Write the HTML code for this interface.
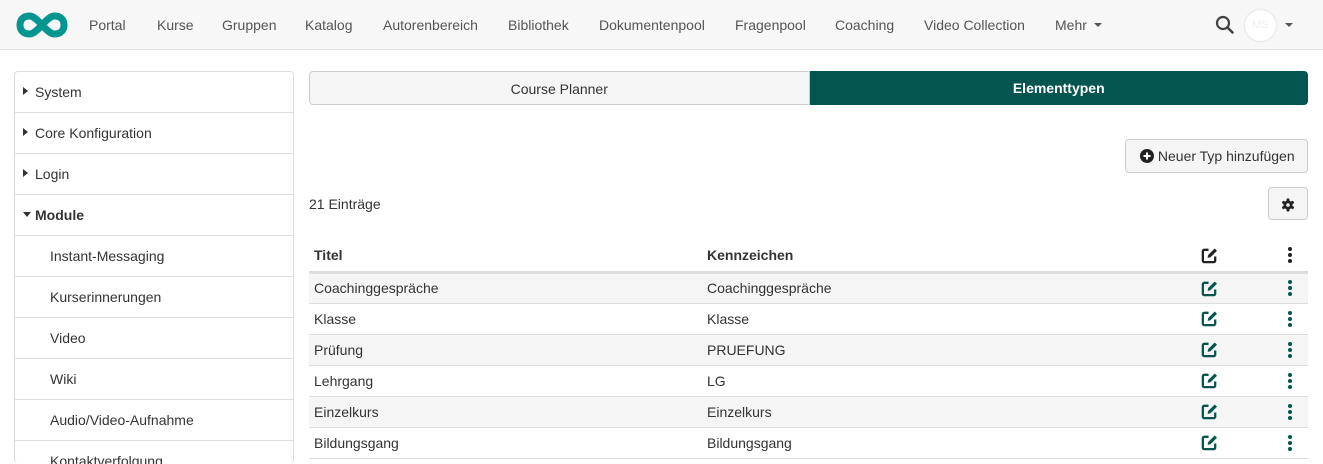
<!DOCTYPE html><html><head><style>
*{box-sizing:border-box;margin:0;padding:0}
html,body{width:1323px;height:464px;overflow:hidden}
body{background:#fff;font-family:"Liberation Sans",Arial,sans-serif;font-size:14px;color:#333;position:relative}
.nav{position:absolute;left:0;top:0;width:1323px;height:50px;background:#f7f7f7;border-bottom:1px solid #e3e3e3}
.nav a{position:absolute;top:17px;color:#555;font-size:14px}
.side{position:absolute;left:14px;top:71px;width:280px;border:1px solid #ddd;border-radius:4px;border-bottom:none;height:393px;overflow:hidden}
.side div{height:41px;border-bottom:1px solid #ddd;padding:12px 0 0 20px;position:relative;color:#333}
.side div.sub{padding-left:35px}
.tri{position:absolute;left:8px;top:15px;width:0;height:0;border-top:4px solid transparent;border-bottom:4px solid transparent;border-left:5px solid #333}
.tabs{position:absolute;left:309px;top:71px;width:999px;height:34px;display:flex}
.tabs div{flex:1;text-align:center;padding-top:9px;font-size:14px}
.btn{position:absolute;border:1px solid #ccc;border-radius:4px;background:#f5f5f5}
table{position:absolute;left:309px;top:240px;width:999px;border-collapse:collapse}
td,th{height:31px;padding:0 5px;text-align:left;font-size:14px;border-bottom:1px solid #ddd}
th{height:32px;border-bottom:3px solid #ddd;font-weight:bold}
tr.s td{background:#f5f5f5}
.ic{text-align:center}
.e{padding-right:36px}
.d{padding-left:8px}
svg{vertical-align:middle}
</style></head><body>
<svg width="0" height="0" style="position:absolute"><defs>
<symbol id="ed" viewBox="0 0 20 20"><path d="M9 4H4.5A1.5 1.5 0 0 0 3 5.5v10A1.5 1.5 0 0 0 4.5 17h10a1.5 1.5 0 0 0 1.5-1.5V11" fill="none" stroke="currentColor" stroke-width="2.4"/><path d="M8 12.5l.6-3L15.5 2.6l2.4 2.4-6.9 6.9z" fill="currentColor"/></symbol>
<symbol id="dt" viewBox="0 0 6 18"><circle cx="3" cy="3" r="2" fill="currentColor"/><circle cx="3" cy="9" r="2" fill="currentColor"/><circle cx="3" cy="15" r="2" fill="currentColor"/></symbol>
</defs></svg>
<div class="nav">
<svg style="position:absolute;left:15px;top:11px" width="54" height="28" viewBox="0 0 54 28"><path d="M14.5 5C8 5 5 9 5 14s3 9 9.5 9C23 23 31 5 39.5 5 46 5 49 9 49 14s-3 9-9.5 9C31 23 23 5 14.5 5z" fill="none" stroke="#039690" stroke-width="7"/></svg>
<a style="left:89px">Portal</a><a style="left:157px">Kurse</a><a style="left:222px">Gruppen</a><a style="left:305px">Katalog</a><a style="left:383px">Autorenbereich</a><a style="left:508px">Bibliothek</a><a style="left:599px">Dokumentenpool</a><a style="left:735px">Fragenpool</a><a style="left:835px">Coaching</a><a style="left:924px">Video Collection</a><a style="left:1055px">Mehr</a>
<div style="position:absolute;left:1094px;top:23px;border-left:4px solid transparent;border-right:4px solid transparent;border-top:4px solid #555"></div>
<svg style="position:absolute;left:1215px;top:15px" width="20" height="20" viewBox="0 0 20 20"><circle cx="8" cy="8" r="6" fill="none" stroke="#444" stroke-width="2.2"/><path d="M12.5 12.5L17.5 17.5" stroke="#444" stroke-width="2.6" stroke-linecap="round"/></svg>
<div style="position:absolute;left:1245px;top:10px;width:31px;height:31px;border-radius:50%;background:#fff;box-shadow:0 0 2px #ccc;color:#eee;font-size:11px;text-align:center;line-height:31px">MS</div>
<div style="position:absolute;left:1285px;top:23px;border-left:4px solid transparent;border-right:4px solid transparent;border-top:4px solid #555"></div>
</div>
<div class="side">
<div><span class="tri"></span>System</div>
<div><span class="tri"></span>Core Konfiguration</div>
<div><span class="tri"></span>Login</div>
<div style="font-weight:bold"><span class="tri" style="border-left:4px solid transparent;border-right:4px solid transparent;border-top:5px solid #333;border-bottom:none;top:17px"></span>Module</div>
<div class="sub">Instant-Messaging</div>
<div class="sub">Kurserinnerungen</div>
<div class="sub">Video</div>
<div class="sub">Wiki</div>
<div class="sub">Audio/Video-Aufnahme</div>
<div class="sub">Kontaktverfolgung</div>
</div>
<div class="tabs"><div style="background:#f5f5f5;border:1px solid #ccc;border-radius:4px 0 0 4px">Course Planner</div><div style="background:#03564f;color:#fff;font-weight:bold;border-radius:0 4px 4px 0">Elementtypen</div></div>
<div class="btn" style="left:1125px;top:139px;width:183px;height:34px;padding:8px 0 0 14px"><svg width="14" height="14" viewBox="0 0 14 14" style="vertical-align:-2px"><circle cx="7" cy="7" r="7" fill="#222"/><path d="M7 3.5v7M3.5 7h7" stroke="#fff" stroke-width="2"/></svg> Neuer Typ hinzufügen</div>
<div style="position:absolute;left:309px;top:196px">21 Einträge</div>
<div class="btn" style="left:1268px;top:187px;width:40px;height:33px;text-align:center;padding-top:8px"><svg width="14" height="14" viewBox="0 0 14 14"><g fill="#222"><circle cx="7" cy="7" r="4.6"/><rect x="5.6" y="0.5" width="2.8" height="13" rx=".6"/><rect x="5.6" y="0.5" width="2.8" height="13" rx=".6" transform="rotate(60 7 7)"/><rect x="5.6" y="0.5" width="2.8" height="13" rx=".6" transform="rotate(120 7 7)"/></g><circle cx="7" cy="7" r="1.8" fill="#f5f5f5"/></svg></div>
<table>
<tr><th style="width:393px">Titel</th><th style="width:480px">Kennzeichen</th><th class="ic e" style="color:#222"><svg width="19" height="19"><use href="#ed"/></svg></th><th class="ic d" style="width:40px;color:#222"><svg width="6" height="18"><use href="#dt"/></svg></th></tr>
<tr class="s"><td>Coachinggespräche</td><td>Coachinggespräche</td><td class="ic e" style="color:#03564f"><svg width="19" height="19"><use href="#ed"/></svg></td><td class="ic d" style="color:#03564f"><svg width="6" height="18"><use href="#dt"/></svg></td></tr>
<tr><td>Klasse</td><td>Klasse</td><td class="ic e" style="color:#03564f"><svg width="19" height="19"><use href="#ed"/></svg></td><td class="ic d" style="color:#03564f"><svg width="6" height="18"><use href="#dt"/></svg></td></tr>
<tr class="s"><td>Prüfung</td><td>PRUEFUNG</td><td class="ic e" style="color:#03564f"><svg width="19" height="19"><use href="#ed"/></svg></td><td class="ic d" style="color:#03564f"><svg width="6" height="18"><use href="#dt"/></svg></td></tr>
<tr><td>Lehrgang</td><td>LG</td><td class="ic e" style="color:#03564f"><svg width="19" height="19"><use href="#ed"/></svg></td><td class="ic d" style="color:#03564f"><svg width="6" height="18"><use href="#dt"/></svg></td></tr>
<tr class="s"><td>Einzelkurs</td><td>Einzelkurs</td><td class="ic e" style="color:#03564f"><svg width="19" height="19"><use href="#ed"/></svg></td><td class="ic d" style="color:#03564f"><svg width="6" height="18"><use href="#dt"/></svg></td></tr>
<tr><td>Bildungsgang</td><td>Bildungsgang</td><td class="ic e" style="color:#03564f"><svg width="19" height="19"><use href="#ed"/></svg></td><td class="ic d" style="color:#03564f"><svg width="6" height="18"><use href="#dt"/></svg></td></tr>
</table>
</body></html>
